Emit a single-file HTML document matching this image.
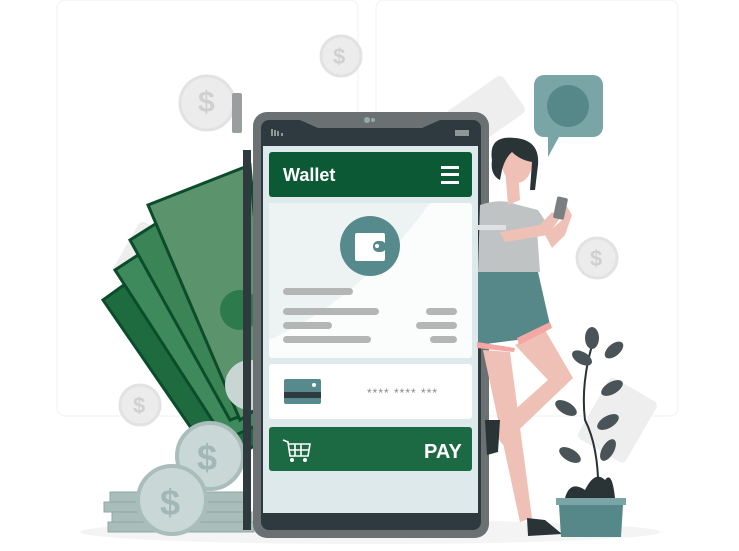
<!DOCTYPE html>
<html><head><meta charset="utf-8"><style>
html,body{margin:0;padding:0;background:#fff;width:739px;height:551px;overflow:hidden}
svg{display:block}
text{font-family:"Liberation Sans",sans-serif}
</style></head><body>
<svg width="739" height="551" viewBox="0 0 739 551">
<rect x="57" y="0" width="301" height="416" rx="8" fill="#fff" stroke="#f2f2f2"/>
<rect x="376" y="0" width="302" height="416" rx="8" fill="#fff" stroke="#f2f2f2"/>
<ellipse cx="370" cy="532" rx="290" ry="12" fill="#f4f4f4"/>
<g fill="#ececec" stroke="#e2e2e2" stroke-width="3">
<circle cx="341" cy="56" r="20"/><circle cx="207" cy="103" r="27"/><circle cx="597" cy="258" r="20"/><circle cx="140" cy="405" r="20"/>
</g>
<g fill="#d0d0d0" font-size="22" font-weight="bold"><text x="333" y="64">$</text><text x="198" y="112" font-size="30">$</text><text x="590" y="266">$</text><text x="133" y="413">$</text></g>
<rect x="450" y="90" width="70" height="45" rx="5" fill="#eeeeee" transform="rotate(-35 485 112)"/>
<rect x="115" y="235" width="60" height="45" rx="5" fill="#eeeeee" transform="rotate(-60 145 257)"/>
<rect x="590" y="385" width="55" height="70" rx="5" fill="#eeeeee" transform="rotate(30 617 420)"/>
<g stroke="#0b4d2b" stroke-width="3">
<polygon points="103,300 200,230 290,420 220,470" fill="#1f6b40"/>
<polygon points="115,270 215,205 290,410 225,440" fill="#3f8a5c"/>
<polygon points="130,240 225,180 285,400 230,420" fill="#3a8456"/>
<polygon points="148,205 250,165 270,400 240,420" fill="#5a936c"/>
</g>
<circle cx="240" cy="310" r="20" fill="#2d7a4d"/>
<circle cx="250" cy="385" r="25" fill="#c8d6d3"/>
<g fill="#a9bdbb" stroke="#8fa6a3">
<rect x="110" y="492" width="140" height="10"/><rect x="104" y="502" width="146" height="10"/><rect x="112" y="512" width="140" height="10"/><rect x="108" y="522" width="146" height="10"/>
</g>
<circle cx="210" cy="456" r="33" fill="#c9d7d6" stroke="#a9bdbb" stroke-width="4"/>
<circle cx="172" cy="500" r="34" fill="#c9d7d6" stroke="#a9bdbb" stroke-width="4"/>
<text x="197" y="470" font-size="36" font-weight="bold" fill="#a2b8b6">$</text>
<text x="160" y="515" font-size="36" font-weight="bold" fill="#a2b8b6">$</text>
<rect x="232" y="93" width="10" height="40" rx="2" fill="#9a9e9f"/>
<rect x="243" y="150" width="8" height="380" fill="#2f3a3f"/>
<rect x="253" y="112" width="236" height="426" rx="14" fill="#6b7173"/>
<rect x="261" y="120" width="220" height="410" rx="8" fill="#2e3a3f"/>
<path d="M300 120 L318 128 L422 128 L440 120 Z" fill="#6b7173"/>
<rect x="263" y="146" width="215" height="367" fill="#dde9ea"/>
<circle cx="367" cy="120" r="3" fill="#9aa"/><circle cx="373" cy="120" r="2" fill="#9aa"/>
<g fill="#8d9798"><rect x="271" y="129" width="2" height="7"/><rect x="274" y="130" width="2" height="6"/><rect x="277" y="131" width="2" height="5"/><rect x="281" y="133" width="2" height="3"/><rect x="455" y="130" width="14" height="6"/></g>
<rect x="269" y="152" width="203" height="45" rx="3" fill="#0b5a35"/>
<text x="283" y="181" font-size="18" font-weight="bold" fill="#fff">Wallet</text>
<g fill="#fff"><rect x="441" y="166" width="18" height="3"/><rect x="441" y="173" width="18" height="3"/><rect x="441" y="181" width="18" height="3"/></g>
<rect x="269" y="203" width="203" height="155" rx="3" fill="#fbfcfc"/>
<path d="M269 203 L430 203 Q360 300 269 340 Z" fill="#edf3f3"/>
<circle cx="370" cy="246" r="30" fill="#578a8c"/>
<rect x="355" y="233" width="30" height="28" rx="2" fill="#fff"/>
<rect x="373" y="241" width="13" height="11" rx="5" fill="#578a8c"/><circle cx="377" cy="246" r="2" fill="#fff"/>
<g fill="#b4b6b6"><rect x="283" y="288" width="70" height="7" rx="3.5"/><rect x="283" y="308" width="96" height="7" rx="3.5"/><rect x="283" y="322" width="49" height="7" rx="3.5"/><rect x="283" y="336" width="88" height="7" rx="3.5"/><rect x="426" y="308" width="31" height="7" rx="3.5"/><rect x="416" y="322" width="41" height="7" rx="3.5"/><rect x="430" y="336" width="27" height="7" rx="3.5"/></g>
<rect x="269" y="364" width="203" height="55" rx="3" fill="#fff"/>
<rect x="284" y="379" width="37" height="25" rx="2" fill="#578a8c"/>
<rect x="284" y="392" width="37" height="6" fill="#2e3a3f"/>
<circle cx="314" cy="385" r="2" fill="#fff"/>
<text x="367" y="397" font-size="12" fill="#8a8a8a" letter-spacing="1">**** **** ***</text>
<rect x="269" y="427" width="203" height="44" rx="3" fill="#1c6a43"/>
<text x="424" y="458" font-size="20" font-weight="bold" fill="#fff">PAY</text>
<g stroke="#fff" stroke-width="1.6" fill="none"><path d="M283 440 L288 442 L290 456 L308 456 L310 444 L288 444"/><path d="M295 444 V456 M301 444 V456 M289 450 H309"/></g>
<circle cx="292" cy="460" r="2" fill="#fff"/><circle cx="305" cy="460" r="2" fill="#fff"/>
<rect x="534" y="75" width="69" height="62" rx="10" fill="#7aa5a7"/>
<path d="M548 135 L560 135 L548 157 Z" fill="#7aa5a7"/>
<ellipse cx="568" cy="106" rx="21" ry="21" fill="#568789"/>
<!-- woman -->
<path d="M483 350 L510 352 L532 518 L520 522 Z" fill="#efc1b6"/>
<path d="M515 345 L545 330 L573 378 L503 445 L492 430 L548 380 Z" fill="#efc1b6"/>
<path d="M485 420 L500 420 L498 452 L487 455 Z" fill="#2a3336"/>
<path d="M527 518 L545 520 L562 534 L528 536 Z" fill="#2a3336"/>
<path d="M478 272 L538 272 L550 325 L517 340 L478 345 Z" fill="#568789"/>
<path d="M477 342 L515 348 L514 352 L477 348 Z" fill="#f4a7a3"/>
<path d="M517 338 L550 322 L552 328 L519 345 Z" fill="#f4a7a3"/>
<path d="M480 205 Q500 198 515 204 Q530 208 538 210 L548 225 L537 230 L540 272 L478 272 Z" fill="#bfc3c4"/>
<rect x="476" y="225" width="30" height="5" fill="#dfe1e2"/>
<path d="M505 168 L518 170 L520 200 L508 205 Z" fill="#efc1b6"/>
<ellipse cx="517" cy="163" rx="15" ry="20" fill="#efc1b6"/>
<path d="M492 160 Q488 135 515 138 Q540 140 538 165 L535 190 L530 190 L532 162 Q520 160 512 152 Q505 158 502 170 L500 180 Q490 175 492 160 Z" fill="#2a3336"/>
<path d="M500 232 L540 225 L552 212 L560 218 L548 235 L505 242 Z" fill="#efc1b6"/>
<path d="M545 235 L562 220 L566 205 L572 215 L565 235 L552 248 Z" fill="#efc1b6"/>
<rect x="555" y="197" width="11" height="22" rx="2" fill="#7a7f81" transform="rotate(12 560 208)"/>
<!-- plant -->
<path d="M598 500 Q600 450 585 420 Q580 380 596 332" stroke="#2a3336" stroke-width="2" fill="none"/>
<g fill="#4a5458">
<ellipse cx="592" cy="338" rx="7" ry="11"/><ellipse cx="614" cy="350" rx="6" ry="11" transform="rotate(50 614 350)"/><ellipse cx="582" cy="358" rx="6" ry="11" transform="rotate(-60 582 358)"/><ellipse cx="612" cy="388" rx="6" ry="12" transform="rotate(60 612 388)"/><ellipse cx="566" cy="408" rx="6" ry="12" transform="rotate(-60 566 408)"/><ellipse cx="608" cy="422" rx="6" ry="12" transform="rotate(60 608 422)"/><ellipse cx="570" cy="455" rx="6" ry="12" transform="rotate(-60 570 455)"/><ellipse cx="608" cy="450" rx="6" ry="12" transform="rotate(30 608 450)"/>
</g>
<path d="M565 498 Q570 480 585 490 Q595 470 605 480 Q612 470 615 498 Z" fill="#2a3336"/>
<rect x="556" y="498" width="70" height="7" fill="#7aa5a7"/>
<path d="M559 505 L623 505 L621 537 L561 537 Z" fill="#568789"/>
</svg>
</body></html>
